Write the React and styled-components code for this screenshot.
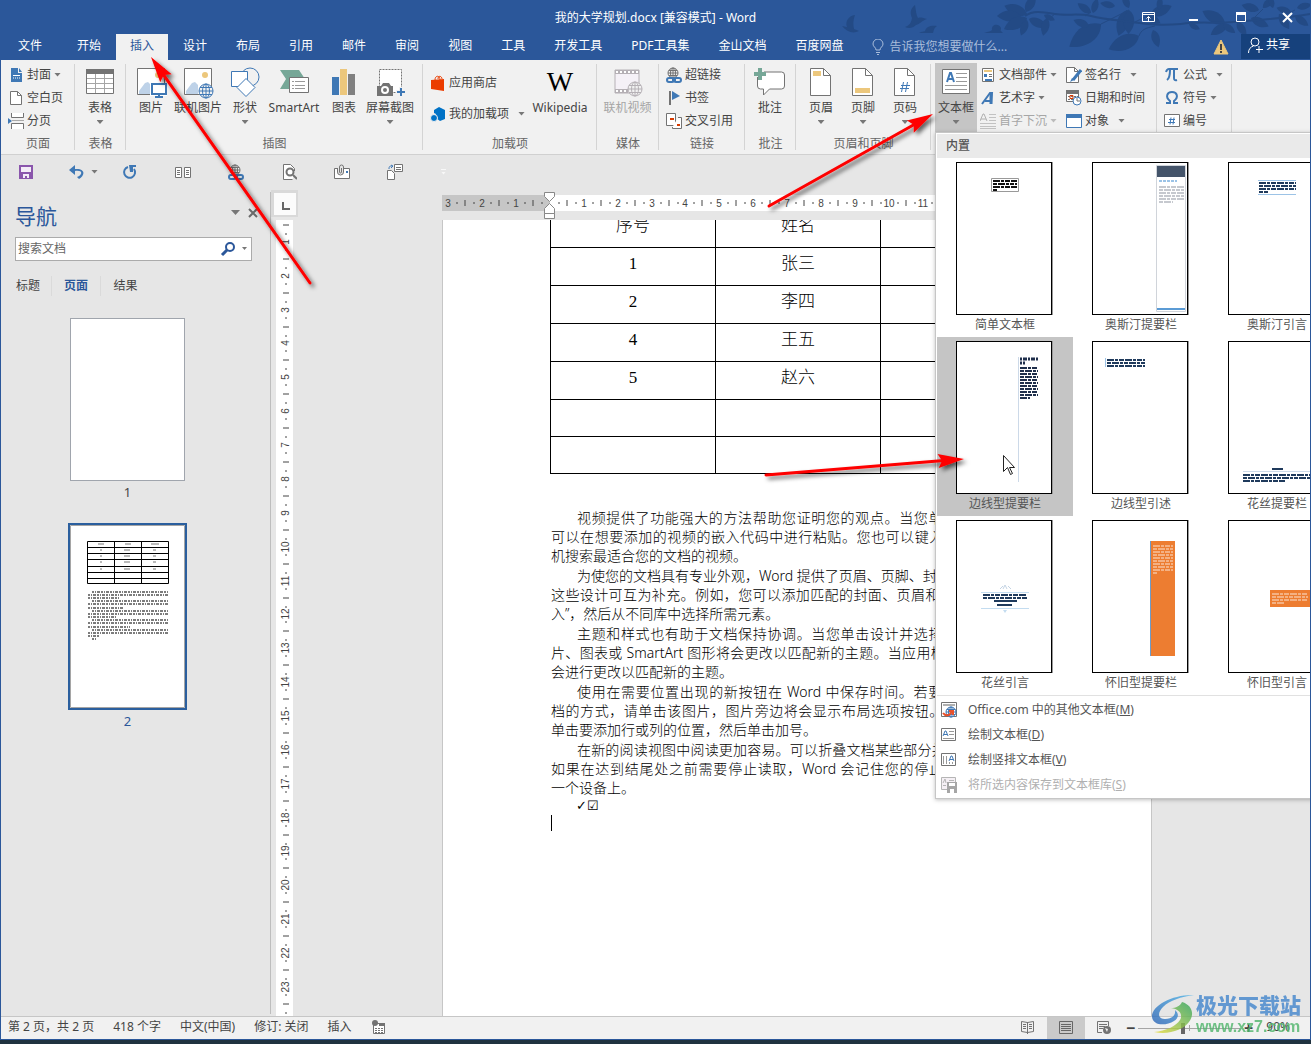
import styled, { createGlobalStyle, css } from "styled-components";

const GlobalStyle = createGlobalStyle`
  * {
    box-sizing: border-box;
  }

  body {
    margin: 0;
    background: #20323f;
  }

  body, button, input {
    font-family: "Noto Sans", "Noto Sans CJK SC", sans-serif;
    font-size: 12px;
    line-height: 16px;
    color: #444;
  }

  button {
    padding: 0;
    border: 0;
    background: none;
    white-space: nowrap;
  }
`;

/* ---------- icons ---------- */

const Svg = styled.svg`
  display: block;
  flex: none;
`;

const Icon = ({ w = 16, h = 16, children }) => (
  <Svg width={w} height={h} viewBox={`0 0 ${w} ${h}`} fill="none" aria-hidden="true">
    {children}
  </Svg>
);

const GREY = "#737373";
const BLUE = "#3f78b5";

const Globe = ({ cx, cy, r, color = BLUE, bg = "#f1f1f1" }) => (
  <g stroke={color} fill="none">
    <circle cx={cx} cy={cy} r={r} fill={bg} />
    <ellipse cx={cx} cy={cy} rx={r / 2} ry={r} />
    <path d={`M${cx - r} ${cy}h${r * 2}M${cx} ${cy - r}v${r * 2}`} />
    <path d={`M${cx - r + 1} ${cy - r / 2}h${r * 2 - 2}M${cx - r + 1} ${cy + r / 2}h${r * 2 - 2}`} />
  </g>
);

const CoverIcon = () => (
  <Icon>
    <path d="M3 1h7v5h4v9H3z" fill={BLUE} />
    <path d="M11 1l3 4h-3z" fill={BLUE} />
    <path d="M5 8l1 1 1-1 1 1 1-1 1 1 1-1 1 1M5 11h1m1 0h1m1 0h1m1 0h1" stroke="#fff" />
  </Icon>
);

const BlankPageIcon = () => (
  <Icon>
    <path d="M2.500 1.500h7l4 4v9h-11z" fill="#fff" stroke={GREY} />
    <path d="M9.500 1.500v4h4" stroke={GREY} />
  </Icon>
);

const PageBreakIcon = () => (
  <Icon>
    <path d="M3.500 0v4.500h12V0M3.500 16v-5.500h12V16" fill="#fff" stroke={GREY} />
    <path d="M0 5l4 3-4 3z" fill={BLUE} />
    <path d="M4 7.500h12" stroke="#aaa" />
  </Icon>
);

const TableIcon = () => (
  <Icon w={30} h={30}>
    <path d="M1.500 2.500h27v24h-27z" fill="#fff" stroke={GREY} />
    <path d="M1 2h28v5H1z" fill={GREY} />
    <path d="M2 11.500h26M2 16.500h26M2 21.500h26M10.500 7v19M19.500 7v19" stroke="#a5a5a5" />
  </Icon>
);

const PictureBase = () => (
  <>
    <path d="M2.500 1.500h27v26h-27z" fill="#fff" stroke={GREY} />
    <circle cx="23" cy="8" r="3" fill="#ecc77c" />
    <path d="M4 27V24l6-8 3-1 3 3v9z" fill="#bed2e8" />
  </>
);

const PictureIcon = () => (
  <Icon w={32} h={32}>
    <PictureBase />
    <path d="M15 16h17v13H15z" fill="#fff" />
    <path d="M17 17h14v10H17z" fill="#fff" stroke={BLUE} strokeWidth="2" />
    <path d="M24 28v3M20 30h8" stroke={BLUE} strokeWidth="2" />
  </Icon>
);

const OnlinePictureIcon = () => (
  <Icon w={32} h={32}>
    <PictureBase />
    <Globe cx={24} cy={24} r={7} />
  </Icon>
);

const ShapesIcon = () => (
  <Icon w={32} h={32}>
    <circle cx="21" cy="10" r="9" stroke={BLUE} />
    <path d="M2.500 4.500h16v15h-16z" fill="#fff" stroke={BLUE} />
    <path d="M17 11.500l9 9-9 9-9-9z" fill="#fff" stroke={BLUE} />
  </Icon>
);

const SmartArtIcon = () => (
  <Icon w={32} h={32}>
    <path d="M2 3h19l6 9-6 10H2l6-10z" fill="#76a797" />
    <path d="M11.500 10.500h19v15h-19z" fill="#fff" stroke={GREY} />
    <path d="M14 14.500h2M14 18.500h2M14 21.500h2M17 14.500h10M17 18.500h10M17 21.500h10" stroke="#999" />
  </Icon>
);

const ChartIcon = () => (
  <Icon w={26} h={30}>
    <path d="M1 10h7v18H1z" fill={BLUE} />
    <path d="M9 2h7v26H9z" fill="#ecc77c" />
    <path d="M17 7h7v21h-7z" fill="#808080" />
  </Icon>
);

const ScreenshotIcon = () => (
  <Icon w={32} h={30}>
    <path d="M5.500 2.500h22v23h-22z" fill="#fff" stroke={GREY} strokeDasharray="2 1" />
    <path d="M3 19h4l2-3h6l2 3h2v10H3z" fill={GREY} />
    <circle cx="11" cy="23" r="3" fill={GREY} stroke="#fff" strokeWidth="2" />
    <path d="M22 25h9M27 20v10" stroke="#f1f1f1" strokeWidth="4" />
    <path d="M23 25h8M27 21v8" stroke={BLUE} strokeWidth="2" />
  </Icon>
);

const StoreIcon = () => (
  <Icon>
    <path d="M1 5l13-1v12L1 14z" fill="#eb3c00" />
    <path d="M5 5c0-5 5-5 5 0M8 4c0-4 4-3 4 0" stroke="#eb3c00" />
  </Icon>
);

const AddinsIcon = () => (
  <Icon>
    <path d="M9 1l6 3v9l-5 2-4-3V8L4 7V4z" fill="#0072c6" />
    <circle cx="4" cy="12" r="3.500" fill="#0072c6" stroke="#f1f1f1" />
  </Icon>
);

const VideoIcon = () => (
  <Icon w={30} h={30}>
    <path d="M2 3h24v23H2z" fill="#f5f1f7" stroke="#b5b0b5" />
    <path d="M2 5h24M2 24h13" stroke="#b5b0b5" strokeWidth="4" />
    <path d="M3 5h23M3 24h12" stroke="#fff" strokeWidth="2" strokeDasharray="2 2" />
    <Globe cx={22} cy={22} r={7} color="#b5b0b5" />
  </Icon>
);

const LinkIcon = () => (
  <Icon>
    <Globe cx={7} cy={6} r={5} color={GREY} />
    <rect x="1" y="11" width="7" height="4" rx="2" stroke={BLUE} strokeWidth="2" fill="#f1f1f1" />
    <rect x="8" y="11" width="7" height="4" rx="2" stroke={BLUE} strokeWidth="2" fill="#f1f1f1" />
    <path d="M6 13h4" stroke={BLUE} strokeWidth="2" />
  </Icon>
);

const FlagIcon = () => (
  <Icon>
    <path d="M3 1h2v14H3z" fill={GREY} />
    <path d="M6 1l8 5-8 4z" fill={BLUE} />
  </Icon>
);

const CrossRefIcon = () => (
  <Icon>
    <path d="M.500 .500h9v12h-9z" fill="#fff" stroke={GREY} />
    <path d="M12 4.500h3.500v11h-9V14" fill="#fff" stroke={GREY} />
    <path d="M4 5h4v2H4zM11 11h3v2h-3z" fill="#d83b01" />
  </Icon>
);

const CommentIcon = () => (
  <Icon w={32} h={32}>
    <path
      d="M3.500 10v9q0 3 3 3h3v6l6-6h12q3 0 3-3v-11q0-3-3-3H10"
      fill="#fff"
      stroke={GREY}
    />
    <path d="M4 1h4v4h4v4H8v4H4V9H0V5h4z" fill="#76a797" />
  </Icon>
);

const PageShape = ({ children }) => (
  <Icon w={24} h={30}>
    <path d="M1.500 1.500h13l7 7v20h-20z" fill="#fff" stroke={GREY} />
    <path d="M14.500 1.500v7h7" stroke={GREY} />
    {children}
  </Icon>
);

const HeaderIcon = () => (
  <PageShape>
    <path d="M4 4h8v5H4z" fill="#ecc77c" />
  </PageShape>
);

const FooterIcon = () => (
  <PageShape>
    <path d="M4 21h15v5H4z" fill="#ecc77c" />
  </PageShape>
);

const PageNumberIcon = () => (
  <PageShape>
    <path d="M10.500 15l-2 10M14.500 15l-2 10" stroke={BLUE} strokeWidth="1" />
    <path d="M8 18.500h9M7 21.500h9" stroke={BLUE} strokeWidth="1" />
  </PageShape>
);

const TextBoxIcon = () => (
  <Icon w={30} h={30}>
    <path d="M1.500 2.500h27v24h-27z" fill="#fff" stroke={GREY} />
    <path d="M6 15L9 6h1l3 9M7 12h5" stroke={BLUE} strokeWidth="2" />
    <path d="M15 6.500h11M15 10.500h11M15 14.500h11M4 18.500h22M4 22.500h22" stroke="#9a9a9a" />
  </Icon>
);

const PartsIcon = () => (
  <Icon>
    <path d="M2.500 1.500h11v13h-11z" fill="#fff" stroke={GREY} />
    <path d="M4 3h8v2H4z" fill="#ecc77c" />
    <path d="M4 7h3v3H4zM5 12h7v2H5z" fill={BLUE} />
    <path d="M9 7.500h3M9 9.500h3" stroke={GREY} />
  </Icon>
);

const WordArtIcon = () => (
  <Icon>
    <path d="M2 14L10 3h2l-1 11M5 11h6" stroke={BLUE} strokeWidth="2" />
    <path d="M11 4v10" stroke={BLUE} strokeWidth="3" />
  </Icon>
);

const DropCapIcon = () => (
  <Icon>
    <path d="M0 8L3 1h1l3 7M1 6h5" stroke="#b0b0b0" />
    <path d="M9 1.500h7M9 4.500h7M9 7.500h7M0 10.500h16M0 13.500h16M0 15.500h16" stroke="#c2c2c2" />
  </Icon>
);

const SignatureIcon = () => (
  <Icon>
    <path d="M.500 .500h8l4 4v11h-12z" fill="#fff" stroke={GREY} />
    <path d="M8.500 .500v4h4" stroke={GREY} />
    <path d="M15 3l-8 10" stroke={BLUE} strokeWidth="3" />
    <path d="M6 11l-2 4 4-2z" fill={BLUE} />
  </Icon>
);

const DateIcon = () => (
  <Icon>
    <path d="M.500 1.500h12v10h-12z" fill="#fff" stroke={GREY} />
    <path d="M0 0h13v4H0z" fill={GREY} />
    <path d="M2 6.500h10M2 9.500h7" stroke={GREY} strokeDasharray="2 1" />
    <path d="M4 5.500h3v3H4z" stroke="#d83b01" />
    <circle cx="11" cy="11" r="4" fill="#fff" stroke={BLUE} />
    <path d="M11 8v3h3" stroke={GREY} />
  </Icon>
);

const ObjectIcon = () => (
  <Icon>
    <path d="M.500 1.500h15v13H.500z" fill="#fff" stroke={BLUE} />
    <path d="M0 1h16v4H0z" fill={BLUE} />
  </Icon>
);

const PiIcon = () => (
  <Icon>
    <path d="M2 5q1-3 3-3h9M6 3q0 8-3 10M10 3v8q0 3 3 2" stroke={BLUE} strokeWidth="2" />
  </Icon>
);

const OmegaIcon = () => (
  <Icon>
    <path d="M2 13h4v-2C1 7 3 2 8 2s7 5 2 9v2h4" stroke={BLUE} strokeWidth="2" />
  </Icon>
);

const NumberIcon = () => (
  <Icon>
    <path d="M.500 1.500h15v12H.500z" fill="#fff" stroke={GREY} />
    <path d="M7 4.500l-1 7M10 4.500l-1 7M5 6.500h6M4 9.500h7" stroke={BLUE} />
  </Icon>
);

const SaveIcon = () => (
  <Icon>
    <path d="M0 1h14v14H0z" fill="#8a56ac" />
    <path d="M2 3h10v5H2zM4 10h6v4H8v-2H6v2H4z" fill="#f3ecf7" />
  </Icon>
);

const UndoIcon = () => (
  <Icon>
    <path d="M6 1L0 6l6 5V7c9-1 7 4 2 6l2 2c6-3 7-11-4-10z" fill={BLUE} />
  </Icon>
);

const RedoIcon = () => (
  <Icon>
    <path d="M6 3a5.500 5.500 0 1 0 6 2" stroke={BLUE} strokeWidth="2" />
    <path d="M7 1h7v2h-3v5H8z" fill={BLUE} />
  </Icon>
);

const ColumnsIcon = () => (
  <Icon>
    <path d="M.500 3.500h6v10h-6zM9.500 3.500h6v10h-6z" fill="#fff" stroke={GREY} />
    <path d="M2 6.500h3M2 8.500h3M2 10.500h3M11 6.500h3M11 8.500h3M11 10.500h3" stroke={GREY} />
  </Icon>
);

const PreviewIcon = () => (
  <Icon>
    <path d="M13.500 7V4.500l-4-4h-7v15h9" fill="#fff" stroke={GREY} />
    <circle cx="9" cy="8" r="3.500" fill="#fff" stroke={GREY} strokeWidth="2" />
    <path d="M12 11l4 4" stroke={GREY} strokeWidth="2" />
  </Icon>
);

const AttachIcon = () => (
  <Icon>
    <path d="M.500 4.500h15v10H.500z" fill="#fff" stroke={GREY} />
    <path d="M12 7h2v2h-2z" fill={BLUE} />
    <path d="M3 2h7v8H3z" fill="#e6e6e6" />
    <path d="M3.500 4v4q0 3 3 3t3-3V3q0-2-2-2t-2 2v5q0 1 1 1t1-1V4" stroke={GREY} />
  </Icon>
);

const FieldIcon = () => (
  <Icon>
    <path d="M7.500 .500h8v7h-8z" fill="#fff" stroke={GREY} />
    <path d="M9 3.500h5M9 5.500h5" stroke={GREY} />
    <path d="M.500 6.500h4l3 3v6h-7z" fill="#fff" stroke={GREY} />
    <path d="M2 5c0-3 1-3 3-3M4 1l2 1-2 2" stroke={BLUE} />
  </Icon>
);

const SearchIcon = () => (
  <Icon>
    <circle cx="10" cy="6" r="4" stroke="#2b579a" strokeWidth="2" />
    <path d="M7 9l-5 5" stroke="#2b579a" strokeWidth="3" />
  </Icon>
);

const CloseIcon = () => (
  <Icon w={12} h={12}>
    <path d="M2 2l8 8M10 2l-8 8" stroke="#6a6a6a" strokeWidth="2" />
  </Icon>
);

const BulbIcon = () => (
  <Icon>
    <path d="M6 11c0-3-3-3-3-6a5 5 0 0 1 10 0c0 3-3 3-3 6z" stroke="#a9bddb" />
    <path d="M6 13.500h4M7 15.500h2" stroke="#a9bddb" />
  </Icon>
);

const WarningIcon = () => (
  <Icon>
    <path d="M8 1l7 14H1z" fill="#ecc77c" stroke="#ecc77c" strokeLinejoin="round" />
    <path d="M7 5h2v6H7zM7 12h2v2H7z" fill="#444" />
  </Icon>
);

const PersonIcon = () => (
  <Icon>
    <circle cx="8" cy="5" r="4" stroke="#fff" />
    <path d="M1.500 16c0-4 2-6 5-7M12 9v7M9 12.500h7" stroke="#fff" />
  </Icon>
);

const RibbonToggleIcon = () => (
  <Icon>
    <path d="M1.500 2.500h12v9h-12zM1 4.500h13" stroke="#fff" />
    <path d="M7.500 11V6.500M5.500 8.500l2-2 2 2" stroke="#fff" />
  </Icon>
);

const MinimizeIcon = () => (
  <Icon>
    <path d="M2 9h9v2H2z" fill="#fff" />
  </Icon>
);

const MaximizeIcon = () => (
  <Icon>
    <path d="M3.500 3.500h9v8h-9z" stroke="#fff" />
    <path d="M3 2h10v3H3z" fill="#fff" />
  </Icon>
);

const ExitIcon = () => (
  <Icon>
    <path d="M4 3l9 9M13 3l-9 9" stroke="#fff" strokeWidth="2" />
  </Icon>
);

const MacroIcon = () => (
  <Icon>
    <path d="M2.500 4.500h11v10h-11z" fill="#fff" stroke={GREY} />
    <path d="M8 4h6v3H8z" fill={GREY} />
    <circle cx="4" cy="4" r="3" fill={GREY} />
    <path d="M4 9.500h8M4 11.500h8M4 13.500h8" stroke={GREY} strokeDasharray="2 1" />
  </Icon>
);

const ReadModeIcon = () => (
  <Icon>
    <path d="M7.500 3.500l-6-1v10l6 1 6-1v-10z" stroke={GREY} />
    <path d="M7.500 3v12M3 5.500h3M3 7.500h3M3 9.500h3M9 5.500h3M9 7.500h3M9 9.500h3" stroke={GREY} />
  </Icon>
);

const PrintLayoutIcon = () => (
  <Icon>
    <path d="M1.500 2.500h13v12h-13z" stroke="#666" />
    <path d="M3 5.500h10M3 7.500h10M3 9.500h10M3 11.500h10" stroke="#666" />
  </Icon>
);

const WebLayoutIcon = () => (
  <Icon>
    <path d="M6 13.500H1.500v-11h11V7M3 5.500h8M3 7.500h6M3 9.500h4" stroke={GREY} />
    <circle cx="11" cy="11" r="4" fill={GREY} />
    <path d="M9 9l3 1-1 3z" fill="#f1f1f1" />
  </Icon>
);

const OfficeMoreIcon = () => (
  <Icon>
    <path d="M.500 .500h15v14H.500z" fill="#fff" stroke={GREY} />
    <path d="M2 3h12" stroke="#b0b0b0" strokeWidth="2" />
    <Globe cx={10} cy={10} r={5} bg="#fff" />
    <path d="M2 11q2 3 6 2l3-3M8 9h4v4" stroke="#e8502a" strokeWidth="2" />
  </Icon>
);

const DrawBoxIcon = () => (
  <Icon>
    <path d="M.500 1.500h14v12H.500z" fill="#fff" stroke={GREY} />
    <path d="M2 9l2-5h1l2 5M3 7.500h3" stroke={BLUE} />
    <path d="M8 4.500h5M8 7.500h5M2 11.500h11" stroke="#999" />
  </Icon>
);

const DrawVerticalIcon = () => (
  <Icon>
    <path d="M.500 1.500h14v12H.500z" fill="#fff" stroke={GREY} />
    <path d="M8 9l2-5h1l2 5M9 7.500h3" stroke={BLUE} />
    <path d="M2.500 4v8M5.500 4v8M8.500 10v2M11.500 10v2" stroke="#999" />
  </Icon>
);

const SaveBoxIcon = () => (
  <Icon>
    <path d="M.500 .500h14v12H.500z" fill="#f5f0f5" stroke="#b5b5b5" />
    <path d="M2 6l2-4 1 4M8 3.500h5M2 8.500h3" stroke="#b5b5b5" />
    <path d="M6 5h10v11H6z" fill="#a6a6a6" />
    <path d="M8 6h6v3H8zM9 12h4v4H9z" fill="#fff" />
  </Icon>
);

/* branches and birds behind the window title: x, y, angle, scale of each leaf */
const LEAVES = [
  [188, 14, 204, 1.6], [182, 16, 184, 1.6], [188, 18, 158, 1.7], [187, 12, 302, 1.3],
  [190, 19, 28, 1.3], [188, 20, 115, 1.1], [208, 18, 106, 1.2], [205, 15, 30, 0.8],
  [262, 24, 148, 2.6], [250, 26, 205, 1.1], [252, 13, 220, 1.1], [254, 13, 290, 1],
  [288, 10, 112, 1.8], [290, 10, 95, 1.6], [300, 36, 160, 2.2], [276, 6, 195, 1],
  [290, 8, 250, 1], [314, 30, 76, 1.2], [312, 15, 340, 1.5], [306, 14, 35, 1.2],
  [320, 10, 280, 0.9], [350, 24, 30, 0.8], [386, 23, 212, 1.7], [388, 24, 150, 1.3],
  [384, 24, 40, 1], [398, 22, 60, 1.1], [412, 18, 30, 1.3], [420, 10, 200, 1.2],
  [424, 8, 320, 1], [440, 14, 60, 1.2], [434, 8, 260, 0.8], [452, 12, 200, 1], [458, 8, 350, 1],
  [456, 16, 40, 1.1],
];

const TitleArt = () => (
  <Icon w={471} h={60}>
    <g fill="#234a85">
      <path d="M3 26l5 1C6 22 9 16 16 15c-2 5-2 10-1 14l5 2c-6 3-12 1-17-5z" />
      <path d="M66 27c5-2 6-4 7-9-2-5-2-9 3-13 1 5 1 10 3 13 3-1 5 0 9 1-6 2-7 5-11 6-3 3-7 4-11 2z" />
      <path d="M80 33c3-2 5-1 6-2 1-5 7-6 12-5-4 3-3 5-4 7z" />
      <path d="M145 33c5-2 6-1 8-3-1-6 7-7 9-2 0 2-1 3 0 3l2 2z" />
      {LEAVES.map(([x, y, deg, size]) => (
        <path
          key={`${x}-${y}-${deg}`}
          d="M0 0C3 -5 10 -5 15 -1C10 4 4 4 0 0Z"
          transform={`translate(${x} ${y}) rotate(${deg}) scale(${size})`}
        />
      ))}
    </g>
    <g stroke="#234a85">
      <path d="M186 16c8-6 18-4 30-2s24-1 36 2 24 4 40 6 28 4 50 2" strokeWidth="2" />
      <path d="M342 24c20-3 34 0 52-2s40-2 77-8" strokeWidth="2" />
      <path d="M216 14l-8 6M246 16l6-4M262 24l28-14M300 36c2-6 6-8 16-10M296 22l16-8M412 21l12-12M440 18l16-8" />
    </g>
  </Icon>
);

/* ---------- window frame ---------- */

const Window = styled.div`
  position: relative;
  display: flex;
  flex-direction: column;
  height: calc(100vh - 4px);
  min-height: 600px;
  overflow: hidden;
  border: 1px solid #2b579a;
  border-top: 0;
  background: #e6e6e6;
`;

const TitleArea = styled.header`
  position: relative;
  flex: none;
  background: #2b579a;
  color: #fff;
`;

const ArtLayer = styled.div`
  position: absolute;
  top: 0;
  right: 0;
`;

const TitleBar = styled.div`
  position: relative;
  display: grid;
  grid-template-columns: 1fr auto 1fr;
  align-items: center;
  height: 34px;
  padding-top: 1px;
`;

const Title = styled.h1`
  grid-column: 2;
  margin: 0;
  font-size: 12px;
  font-weight: 400;
`;

const WindowControls = styled.div`
  display: flex;
  justify-content: flex-end;
  gap: 30px;
  padding-right: 15px;
`;

const TabBar = styled.nav`
  position: relative;
  display: flex;
  gap: 1px;
  height: 26px;
`;

const Tab = styled.button`
  padding: 0 14px 2px;
  color: ${({ $active }) => ($active ? "#2b579a" : "#fff")};
  background: ${({ $active }) => ($active ? "#f1f1f1" : "transparent")};

  &:first-child {
    padding: 0 20px 2px 17px;
  }
`;

const TellMe = styled.label`
  display: flex;
  flex: 1;
  align-items: center;
  gap: 3px;
  padding: 0 0 0 12px;

  input {
    width: 180px;
    padding: 0;
    border: 0;
    outline: 0;
    background: none;
  }

  input::placeholder {
    color: #a9bddb;
    opacity: 1;
  }
`;

const WarningSlot = styled.span`
  display: flex;
  align-items: center;
  padding-right: 11px;
`;

const ShareButton = styled.button`
  display: flex;
  align-items: center;
  gap: 3px;
  width: 69px;
  height: 25px;
  padding: 0 6px 4px;
  background: #16417c;
  color: #fff;
`;

/* ---------- ribbon ---------- */

const Ribbon = styled.section`
  display: flex;
  flex: none;
  height: 95px;
  border-bottom: 1px solid #d0d0d0;
  background: #f1f1f1;
`;

const Group = styled.div`
  position: relative;
  display: flex;
  flex: none;
  flex-direction: column;
  width: ${({ $width }) => $width}px;
  padding-top: 3px;

  &::after {
    content: "";
    position: absolute;
    top: 4px;
    right: 0;
    width: 1px;
    height: 86px;
    background: #d4d4d4;
  }
`;

const GroupBody = styled.div`
  display: flex;
  height: 69px;
  padding-left: ${({ $pad }) => $pad || 0}px;
`;

const GroupName = styled.div`
  padding-top: 4px;
  text-align: center;
  color: #666;
`;

const Caret = styled.i`
  flex: none;
  width: 7px;
  height: 4px;
  background: ${({ $dim }) => ($dim ? "#bbb" : "#777")};
  clip-path: polygon(0 0, 100% 0, 50% 100%);
`;

const BigButton = styled.button`
  display: flex;
  flex: none;
  flex-direction: column;
  align-items: center;
  width: ${({ $width }) => $width || 42}px;
  height: 69px;
  color: ${({ disabled }) => (disabled ? "#a6a6a6" : "#444")};
  background: ${({ $pressed }) => ($pressed ? "#c5c5c5" : "transparent")};

  ${Caret} {
    margin-top: 4px;
  }
`;

const BigIcon = styled.span`
  display: flex;
  align-items: flex-start;
  height: 37px;
  padding-top: 4px;
`;

const WikiLetter = styled.span`
  font-family: "Liberation Serif", serif;
  font-size: 28px;
  line-height: 30px;
  color: #000;
`;

const SmallColumn = styled.div`
  display: flex;
  flex: none;
  flex-direction: column;
  width: ${({ $width }) => $width || 80}px;
  padding-top: ${({ $loose }) => ($loose ? 4 : 0)}px;
`;

const SmallButton = styled.button`
  display: flex;
  align-items: center;
  gap: 3px;
  height: ${({ $tall }) => ($tall ? 31 : 23)}px;
  color: ${({ disabled }) => (disabled ? "#a6a6a6" : "#444")};

  ${Caret} {
    margin-left: ${({ $far }) => ($far ? 6 : 0)}px;
  }
`;

const Big = ({ icon, label, caret, ...rest }) => (
  <BigButton {...rest}>
    <BigIcon>{icon}</BigIcon>
    {label}
    {caret && <Caret />}
  </BigButton>
);

const Small = ({ icon, label, caret, ...rest }) => (
  <SmallButton {...rest}>
    {icon}
    {label}
    {caret && <Caret $dim={rest.disabled} />}
  </SmallButton>
);

/* ---------- quick access toolbar ---------- */

const QuickBar = styled.div`
  display: flex;
  flex: none;
  align-items: center;
  height: 35px;
  padding: 0 0 2px 18px;
`;

const QuickSlot = styled.div`
  display: flex;
  align-items: center;
  gap: 6px;
  width: 53px;

  &:first-child {
    width: 50px;
  }
`;

const QuickMore = styled.button`
  display: flex;
  flex-direction: column;
  align-items: center;
  gap: 2px;
  margin-left: 1px;

  &::before {
    content: "";
    width: 5px;
    height: 1px;
    background: #f8f8f8;
  }

  ${Caret} {
    width: 5px;
    height: 3px;
    background: #f8f8f8;
  }
`;

/* ---------- navigation pane ---------- */

const Workspace = styled.div`
  display: flex;
  flex: 1;
  min-height: 0;
`;

const NavPane = styled.aside`
  flex: none;
  width: 270px;
  margin: 2px 0;
  border-right: 1px solid #bdbdbd;
  padding: 9px 18px 0 14px;
`;

const NavHeader = styled.div`
  display: flex;
  align-items: flex-start;
  gap: 7px;
  margin-right: -7px;

  h2 {
    flex: 1;
    margin: 0;
    font-size: 21px;
    line-height: 30px;
    font-weight: 400;
    color: #2b579a;
  }

  button {
    display: flex;
    align-items: center;
    height: 23px;
  }
`;

const WideCaret = styled(Caret)`
  width: 9px;
  height: 5px;
`;

const SearchBox = styled.label`
  display: flex;
  align-items: center;
  height: 24px;
  margin-top: 6px;
  border: 1px solid #ababab;
  padding: 0 4px 1px 2px;
  background: #fff;

  input {
    flex: 1;
    min-width: 0;
    border: 0;
    outline: 0;
    padding: 0;
  }

  input::placeholder {
    color: #666;
    opacity: 1;
  }

  ${Caret} {
    margin-left: 6px;
    width: 5px;
    height: 3px;
  }
`;

const NavTabs = styled.div`
  display: flex;
  margin-top: 15px;
`;

const NavTab = styled.button`
  height: 20px;
  width: 49px;
  border-right: 1px solid #dadada;

  &:first-child {
    width: 37px;
    padding-right: 10px;
  }

  &:last-child {
    border-right: 0;
  }

  ${({ $active }) =>
    $active &&
    css`
      font-weight: 700;
      color: #2b579a;
    `}
`;

const PageList = styled.div`
  display: flex;
  flex-direction: column;
  align-items: center;
  padding: 22px 12px 0 0;
`;

const PageThumb = styled.button`
  width: ${({ $active }) => ($active ? 119 : 115)}px;
  height: ${({ $active }) => ($active ? 187 : 163)}px;
  border: ${({ $active }) => ($active ? "2px solid #2b5f9e" : "1px solid #a0a5ad")};
  background: #fff;
  overflow: hidden;
`;

const PageLabel = styled.span`
  margin: 3px 0 23px;
  font-size: 13px;
  color: ${({ $active }) => ($active ? "#2b579a" : "#444")};
`;

const MINI_LINES = [
  [22, 98, 67], [18, 98, 70], [18, 49, 73], [22, 98, 76], [18, 98, 79], [18, 54, 83],
  [22, 98, 86], [18, 98, 89], [18, 46, 92], [22, 98, 95], [18, 98, 98], [18, 60, 102],
  [22, 98, 105], [18, 98, 108], [18, 30, 111], [22, 26, 114],
];

const MiniPage = () => (
  <Icon w={115} h={183}>
    <path d="M.500 .500h114v182H.500z" stroke="#a5a5a5" />
    <path
      d="M17.500 16.500h81v42h-81zM17 22.500h82M17 28.500h82M17 34.500h82M17 41.500h82M17 47.500h82M17 53.500h82M44.500 16v43M71.500 16v43"
      stroke="#000"
    />
    {[19, 25, 31, 37, 44].map((y, i) => (
      <path
        key={y}
        d={i ? `M30 ${y}h2M54 ${y}h6M83 ${y}h3` : `M28 ${y}h6M55 ${y}h6M81 ${y}h8`}
        stroke="#777"
      />
    ))}
    {MINI_LINES.map(([x1, x2, y]) => (
      <path
        key={y}
        d={`M${x1} ${y}H${x2}`}
        stroke="#444"
        strokeWidth="2"
        strokeOpacity="0.7"
        strokeDasharray="2 1 1 1 3 1"
      />
    ))}
  </Icon>
);

/* ---------- rulers ---------- */

// one ruler centimetre at 90% zoom, snapped to whole pixels
const cm = (n) => Math.round((n * 508) / 15);

const RulerText = styled.text`
  font-family: "Liberation Sans", sans-serif;
  font-size: 10px;
  fill: #444;
  text-anchor: middle;
`;

const RulerColumn = styled.div`
  display: flex;
  flex: none;
  flex-direction: column;
  align-items: center;
  width: 27px;
  margin-right: -5px;
  overflow: hidden;
`;

const TabStop = styled.button`
  display: flex;
  flex: none;
  align-items: center;
  justify-content: center;
  width: 27px;
  height: 27px;
  background: #d9d9d9;

  span {
    width: 22px;
    height: 22px;
    padding: 9px 8px;
    background: #fbfbfb;
  }

  i {
    display: block;
    width: 8px;
    height: 8px;
    border: solid #666;
    border-width: 0 0 2px 2px;
  }
`;

const VerticalTrack = styled.div`
  flex: 1;
  min-height: 0;
  width: 17px;
  margin: 3px 0 0 -1px;
  background: #fff;
  overflow: hidden;
`;

const VerticalRuler = () => (
  <VerticalTrack>
    <Icon w={17} h={820}>
      {Array.from({ length: 24 }, (_, n) => {
        const y = cm(n) - 12;
        return (
          <g key={n}>
            {n > 0 && (
              <RulerText transform={`translate(13 ${y}) rotate(-90)`}>{n}</RulerText>
            )}
            <path d={`M9 ${y + 8}h2M9 ${y + 26}h2`} stroke="#444" />
            <path d={`M7 ${y + 17}h6`} stroke="#444" />
          </g>
        );
      })}
    </Icon>
  </VerticalTrack>
);

const ZERO = 108;

const HorizontalRuler = () => (
  <Icon w={710} h={30}>
    <path d="M0 5h710v16H0z" fill="#fff" />
    <path d={`M0 5h${ZERO}v16H0zM603 5h107v16H603z`} fill="#c6c6c6" />
    {Array.from({ length: 20 }, (_, i) => {
      const n = i - 3;
      const x = ZERO + cm(n);
      return (
        <g key={n}>
          {n !== 0 && (
            <RulerText x={x} y={17}>
              {Math.abs(n)}
            </RulerText>
          )}
          <path d={`M${x + 9} 12v2M${x + 26} 12v2M${x + 17} 10v6`} stroke="#444" />
        </g>
      );
    })}
    <path
      d="M102.500 2.500h10v4l-5 5-5-5zM102.500 23.500v-5l5-5 5 5v5zM102.500 23.500h10v5h-10z"
      fill="#fff"
      stroke="#888"
    />
  </Icon>
);

/* ---------- document ---------- */

const DocColumn = styled.div`
  display: flex;
  flex: 1;
  flex-direction: column;
  align-items: center;
  min-width: 0;
  padding-right: 9px;
  overflow: hidden;
`;

const Sheet = styled.main`
  flex: 1;
  width: 710px;
  min-height: 0;
  overflow: hidden;
  border: 1px solid #c6c6c6;
  border-width: 0 1px;
  padding: 0 106px 0 107px;
  background: #fff;
  color: #000;
`;

const ScoreTable = styled.table`
  width: 496px;
  margin-top: -11px;
  border-collapse: collapse;
  table-layout: fixed;
  font-family: "Liberation Serif", "Noto Sans CJK SC", serif;
  font-size: 17px;
  line-height: 20px;
  font-weight: 300;

  td, th {
    height: 38px;
    border: 1px solid #000;
    padding: 0 0 5px;
    text-align: center;
    font-weight: 300;
  }

  tr:nth-last-child(-n + 2) td {
    height: 37px;
  }
`;

const Article = styled.div`
  padding: 34px 0 0 1px;
  font-family: "Noto Sans", "Noto Sans CJK SC", sans-serif;
  font-size: 14px;
  line-height: 19px;
  font-weight: 300;
`;

const Paragraph = styled.p`
  margin: 0 0 1px;
  text-indent: 26px;
`;

const Line = styled.span`
  display: block;
  white-space: nowrap;
  text-align: justify;
  text-align-last: justify;

  & + & {
    text-indent: 0;
  }

  &:last-child {
    text-align-last: left;
  }
`;

const CheckLine = styled.div`
  padding-left: 25px;
  font-family: "DejaVu Sans", sans-serif;
  font-size: 13px;
  line-height: 16px;
`;

const TextCaret = styled.div`
  width: 1px;
  height: 16px;
  margin-top: 1px;
  background: #000;
`;

const ROWS = [
  ["1", "张三"],
  ["2", "李四"],
  ["4", "王五"],
  ["5", "赵六"],
  ["", ""],
  ["", ""],
];

// full-width comma
const C = "\uff0c";

const PARAGRAPHS = [
  [
    `视频提供了功能强大的方法帮助您证明您的观点。当您单击联机视频时${C}`,
    "可以在想要添加的视频的嵌入代码中进行粘贴。您也可以键入一个关键字以联",
    "机搜索最适合您的文档的视频。",
  ],
  [
    `为使您的文档具有专业外观${C}Word 提供了页眉、页脚、封面和文本框设计${C}`,
    `这些设计可互为补充。例如${C}您可以添加匹配的封面、页眉和提要栏。单击“插`,
    `入”${C}然后从不同库中选择所需元素。`,
  ],
  [
    `主题和样式也有助于文档保持协调。当您单击设计并选择新的主题时${C}图`,
    `片、图表或 SmartArt 图形将会更改以匹配新的主题。当应用样式时${C}您的标题`,
    "会进行更改以匹配新的主题。",
  ],
  [
    "使用在需要位置出现的新按钮在 Word 中保存时间。若要更改图片适应文",
    `档的方式${C}请单击该图片${C}图片旁边将会显示布局选项按钮。当处理表格时${C}`,
    `单击要添加行或列的位置${C}然后单击加号。`,
  ],
  [
    "在新的阅读视图中阅读更加容易。可以折叠文档某些部分并关注所需文本。",
    `如果在达到结尾处之前需要停止读取${C}Word 会记住您的停止位置 - 即使在另`,
    "一个设备上。",
  ],
];

/* ---------- text box gallery ---------- */

const Gallery = styled.div`
  position: absolute;
  z-index: 2;
  top: 72px;
  left: 4px;
  width: 430px;
  border: 1px solid #c6c6c6;
  padding: 1px;
  background: #fff;
  box-shadow: 0 1px 4px rgba(0, 0, 0, 0.25);
`;

const GalleryHeading = styled.h3`
  height: 24px;
  margin: 0;
  padding: 4px 9px;
  background: #eaeaea;
  font-size: 12px;
  font-weight: 500;
  color: #555;
`;

const GalleryGrid = styled.div`
  display: grid;
  grid-template-columns: repeat(3, 136px);
  border-bottom: 1px solid #e1e1e1;
`;

const GalleryItem = styled.button`
  display: flex;
  flex-direction: column;
  align-items: center;
  height: 179px;
  padding-top: 4px;
  line-height: 20px;
  background: ${({ $hot }) => ($hot ? "#c5c5c5" : "transparent")};
  color: #555;
`;

const Preview = styled.span`
  width: 96px;
  height: 153px;
  margin-right: 2px;
  border: 1px solid #000;
  background: #fff;
  box-shadow: 1px 0 #999;
  overflow: hidden;
`;

const MenuItem = styled.button`
  display: flex;
  align-items: center;
  gap: 11px;
  width: 100%;
  height: 25px;
  padding-left: 4px;
  color: ${({ disabled }) => (disabled ? "#b0b0b0" : "#555")};
`;

const Menu = styled.div`
  padding: 1px 0 0;
`;

// rows of tiny unreadable type inside a preview
const Blurb = ({ x, y, width, rows, color, last = 12, step = 3 }) =>
  Array.from({ length: rows }, (_, i) => (
    <path
      key={i}
      d={`M${x} ${y + i * step}h${i === rows - 1 ? last : width}`}
      stroke={color}
      strokeWidth="2"
      strokeDasharray={i % 2 ? "4 1 7 1 3 1" : "7 1 3 1 5 1"}
    />
  ));

const GALLERY = [
  {
    name: "简单文本框",
    art: (
      <>
        <path d="M34.500 15.500h27v13h-27z" stroke="#999" />
        <Blurb x={36} y={18} width={24} rows={4} color="#111" last={5} />
      </>
    ),
  },
  {
    name: "奥斯汀提要栏",
    art: (
      <>
        <path d="M63.500 2.500h29v146h-29z" stroke="#d0d4da" />
        <path d="M64 3h28v11H64z" fill="#44546a" />
        <path d="M66 18h18" stroke="#9cc3e6" strokeWidth="2" strokeDasharray="3 1" />
        <Blurb x={66} y={24} width={25} rows={6} color="#c6c9cf" last={14} />
        <path d="M64 146h28" stroke="#5b9bd5" strokeWidth="2" />
      </>
    ),
  },
  {
    name: "奥斯汀引言",
    art: (
      <>
        <path d="M29 17.500h38M29 31.500h38" stroke="#9cc3e6" />
        <Blurb x={30} y={20} width={37} rows={4} color="#1f3a5c" last={9} />
      </>
    ),
  },
  {
    name: "边线型提要栏",
    hot: true,
    art: (
      <>
        <path d="M61.500 15v125" stroke="#ccd9e8" />
        <path d="M63 17h18M63 21h5" stroke="#1f2f4c" strokeWidth="3" strokeDasharray="2 1 4 1" />
        <Blurb x={63} y={26} width={18} rows={11} color="#1f2f4c" last={10} />
      </>
    ),
  },
  {
    name: "边线型引述",
    art: (
      <>
        <path d="M12.500 16v9" stroke="#9cc3e6" />
        <Blurb x={14} y={18} width={38} rows={3} color="#1f3a5c" last={38} />
      </>
    ),
  },
  {
    name: "花丝提要栏",
    art: (
      <>
        <path d="M43 127h11" stroke="#1f3a5c" strokeWidth="2" />
        <path d="M14 129.500h76" stroke="#ccd9e8" />
        <Blurb x={14} y={133} width={76} rows={3} color="#1f3a5c" last={42} />
      </>
    ),
  },
  {
    name: "花丝引言",
    art: (
      <>
        <path d="M43 68l3-3m5 0l3 3M46 68l2-4 2 4" stroke="#c3d3e4" />
        <path d="M24 71.500h48M24 87.500h48" stroke="#c3dcf0" />
        <Blurb x={26} y={74} width={44} rows={2} color="#1f3a5c" last={44} />
        <path d="M37 80h23M40 84h15" stroke="#1f3a5c" strokeWidth="2" />
        <path d="M46 89l2 3 2-3z" fill="#c3dcf0" />
      </>
    ),
  },
  {
    name: "怀旧型提要栏",
    art: (
      <>
        <path d="M57 20h25v115H57z" fill="#ed7d31" />
        <path d="M57 20h1v115h-1z" fill="#6f9bc8" />
        <Blurb x={60} y={25} width={20} rows={10} color="#f4b183" last={5} />
      </>
    ),
  },
  {
    name: "怀旧型引言",
    art: (
      <>
        <path d="M41 69h41v17H41z" fill="#ed7d31" />
        <path d="M81 69h1v17h-1z" fill="#6f9bc8" />
        <Blurb x={43} y={73} width={36} rows={4} color="#f4b183" last={12} />
      </>
    ),
  },
];

/* ---------- status bar ---------- */

const StatusBar = styled.footer`
  display: flex;
  flex: none;
  align-items: stretch;
  height: 23px;
  border-top: 1px solid #c6c6c6;
  padding: 0 20px 0 7px;
  background: #f1f1f1;
`;

const StatusInfo = styled.div`
  display: flex;
  flex: 1;
  gap: 19px;
  padding-top: 2px;
`;

const ViewButton = styled.button`
  display: flex;
  align-items: center;
  justify-content: center;
  width: 38px;
  padding-bottom: 2px;
  background: ${({ $active }) => ($active ? "#cacaca" : "transparent")};
`;

const ZoomControl = styled.div`
  display: flex;
  align-items: center;
  gap: 4px;
  margin-left: 3px;

  output {
    width: 34px;
    padding-bottom: 3px;
    text-align: right;
  }
`;

const ZoomStep = styled.button`
  width: 8px;
  font-size: 16px;
  font-weight: 700;
  line-height: 16px;
`;

const ZoomSlider = styled.input`
  width: 102px;
  height: 12px;
  margin: 0;
  appearance: none;
  background: linear-gradient(#a5a5a5, #a5a5a5) center / 100% 1px no-repeat,
    linear-gradient(#a5a5a5, #a5a5a5) center / 1px 6px no-repeat;

  &::-webkit-slider-thumb {
    appearance: none;
    width: 4px;
    height: 11px;
    background: #666;
  }
`;

/* ---------- overlays ---------- */

const Watermark = styled.div`
  position: absolute;
  z-index: 3;
  right: 9px;
  bottom: 3px;
  display: flex;
  align-items: center;
  gap: 1px;
  opacity: 0.8;
  pointer-events: none;
`;

const WatermarkText = styled.div`
  display: flex;
  flex-direction: column;
  font-weight: 700;

  strong {
    font-size: 21px;
    line-height: 26px;
    color: #4285cc;
  }

  span {
    font-family: "Liberation Sans", sans-serif;
    font-size: 16px;
    line-height: 18px;
    color: #4fb56b;
  }
`;

const SwirlLogo = () => (
  <Icon w={44} h={40}>
    <defs>
      <linearGradient id="sky" x1="0" y1="1" x2="1" y2="0">
        <stop offset="0" stopColor="#2a63b5" />
        <stop offset="1" stopColor="#4db4e8" />
      </linearGradient>
      <linearGradient id="leaf" x1="0" y1="1" x2="1" y2="0">
        <stop offset="0" stopColor="#e8dc3c" />
        <stop offset="1" stopColor="#2da35c" />
      </linearGradient>
    </defs>
    <path
      d="M43 1C22 0 0 12 1 23c1 9 14 9 22 4 5-3 5-8 1-11 1 6-4 9-10 9-7 0-8-6-2-12C19 6 30 3 43 1z"
      fill="url(#sky)"
    />
    <path d="M20 14c5 0 9-2 11-6 10 3 13 12 7 20C32 36 18 41 3 38c12-1 22-6 26-12 3-5 0-11-9-12z" fill="url(#leaf)" />
  </Icon>
);

const Annotations = styled.svg`
  position: absolute;
  z-index: 4;
  top: 0;
  left: -1px;
  pointer-events: none;
  overflow: visible;
`;

const ARROWS = [
  { from: [310, 283], to: [151, 57] },
  { from: [769, 206], to: [933, 114] },
  { from: [766, 475], to: [964, 459] },
];

const Arrow = ({ from, to }) => {
  const dx = to[0] - from[0];
  const dy = to[1] - from[1];
  const len = Math.hypot(dx, dy);
  const angle = (Math.atan2(dy, dx) * 180) / Math.PI;
  return (
    <g transform={`translate(${from[0]} ${from[1]}) rotate(${angle})`}>
      <path d={`M0 0H${len - 20}`} stroke="#fe0000" strokeWidth="3" strokeLinecap="round" />
      <path d={`M${len} 0l-26 -7 4 7 -4 7z`} fill="#fe0000" />
    </g>
  );
};

const TABS = [
  "文件", "开始", "插入", "设计", "布局", "引用", "邮件", "审阅", "视图", "工具",
  "开发工具", "PDF工具集", "金山文档", "百度网盘",
];

function App() {
  return (
    <>
      <GlobalStyle />
      <Window>
        <TitleArea>
          <ArtLayer>
            <TitleArt />
          </ArtLayer>
          <TitleBar>
            <Title>我的大学规划.docx [兼容模式] - Word</Title>
            <WindowControls>
              <button aria-label="功能区显示选项"><RibbonToggleIcon /></button>
              <button aria-label="最小化"><MinimizeIcon /></button>
              <button aria-label="最大化"><MaximizeIcon /></button>
              <button aria-label="关闭"><ExitIcon /></button>
            </WindowControls>
          </TitleBar>
          <TabBar>
            {TABS.map((name) => (
              <Tab key={name} $active={name === "插入"}>{name}</Tab>
            ))}
            <TellMe>
              <BulbIcon />
              <input aria-label="告诉我您想要做什么" placeholder="告诉我您想要做什么..." />
            </TellMe>
            <WarningSlot><WarningIcon /></WarningSlot>
            <ShareButton><PersonIcon />共享</ShareButton>
          </TabBar>
        </TitleArea>

        <Ribbon>
          <Group $width={74}>
            <GroupBody $pad={7}>
              <SmallColumn $width={60}>
                <Small icon={<CoverIcon />} label="封面" caret />
                <Small icon={<BlankPageIcon />} label="空白页" />
                <Small icon={<PageBreakIcon />} label="分页" />
              </SmallColumn>
            </GroupBody>
            <GroupName>页面</GroupName>
          </Group>
          <Group $width={51}>
            <GroupBody $pad={4}>
              <Big icon={<TableIcon />} label="表格" caret />
            </GroupBody>
            <GroupName>表格</GroupName>
          </Group>
          <Group $width={297}>
            <GroupBody $pad={4}>
              <Big icon={<PictureIcon />} label="图片" />
              <Big $width={52} icon={<OnlinePictureIcon />} label="联机图片" />
              <Big icon={<ShapesIcon />} label="形状" caret />
              <Big $width={56} icon={<SmartArtIcon />} label="SmartArt" />
              <Big $width={44} icon={<ChartIcon />} label="图表" />
              <Big $width={48} icon={<ScreenshotIcon />} label="屏幕截图" caret />
            </GroupBody>
            <GroupName>插图</GroupName>
          </Group>
          <Group $width={174}>
            <GroupBody $pad={7}>
              <SmallColumn $width={99} $loose>
                <Small $tall icon={<StoreIcon />} label="应用商店" />
                <Small $tall $far icon={<AddinsIcon />} label="我的加载项" caret />
              </SmallColumn>
              <Big $width={62} icon={<WikiLetter>W</WikiLetter>} label="Wikipedia" />
            </GroupBody>
            <GroupName>加载项</GroupName>
          </Group>
          <Group $width={62}>
            <GroupBody>
              <Big $width={61} icon={<VideoIcon />} label="联机视频" disabled />
            </GroupBody>
            <GroupName>媒体</GroupName>
          </Group>
          <Group $width={86}>
            <GroupBody $pad={7}>
              <SmallColumn $width={76}>
                <Small icon={<LinkIcon />} label="超链接" />
                <Small icon={<FlagIcon />} label="书签" />
                <Small icon={<CrossRefIcon />} label="交叉引用" />
              </SmallColumn>
            </GroupBody>
            <GroupName>链接</GroupName>
          </Group>
          <Group $width={51}>
            <GroupBody $pad={4}>
              <Big icon={<CommentIcon />} label="批注" />
            </GroupBody>
            <GroupName>批注</GroupName>
          </Group>
          <Group $width={135}>
            <GroupBody $pad={4}>
              <Big icon={<HeaderIcon />} label="页眉" caret />
              <Big icon={<FooterIcon />} label="页脚" caret />
              <Big icon={<PageNumberIcon />} label="页码" caret />
            </GroupBody>
            <GroupName>页眉和页脚</GroupName>
          </Group>
          <Group $width={226}>
            <GroupBody $pad={4}>
              <Big $pressed icon={<TextBoxIcon />} label="文本框" caret />
              <GroupBody $pad={3}>
                <SmallColumn $width={86}>
                  <Small icon={<PartsIcon />} label="文档部件" caret />
                  <Small icon={<WordArtIcon />} label="艺术字" caret />
                  <Small icon={<DropCapIcon />} label="首字下沉" caret disabled />
                </SmallColumn>
                <SmallColumn>
                  <Small $far icon={<SignatureIcon />} label="签名行" caret />
                  <Small icon={<DateIcon />} label="日期和时间" />
                  <Small $far icon={<ObjectIcon />} label="对象" caret />
                </SmallColumn>
              </GroupBody>
            </GroupBody>
            <Gallery>
              <GalleryHeading>内置</GalleryHeading>
              <GalleryGrid>
                {GALLERY.map(({ name, hot, art }) => (
                  <GalleryItem key={name} $hot={hot}>
                    <Preview>
                      <Icon w={94} h={151}>{art}</Icon>
                    </Preview>
                    {name}
                  </GalleryItem>
                ))}
              </GalleryGrid>
              <Menu>
                <MenuItem><OfficeMoreIcon /><span>Office.com 中的其他文本框(<u>M</u>)</span></MenuItem>
                <MenuItem><DrawBoxIcon /><span>绘制文本框(<u>D</u>)</span></MenuItem>
                <MenuItem><DrawVerticalIcon /><span>绘制竖排文本框(<u>V</u>)</span></MenuItem>
                <MenuItem disabled><SaveBoxIcon /><span>将所选内容保存到文本框库(<u>S</u>)</span></MenuItem>
              </Menu>
            </Gallery>
          </Group>
          <Group $width={75}>
            <GroupBody $pad={7}>
              <SmallColumn $width={66}>
                <Small $far icon={<PiIcon />} label="公式" caret />
                <Small icon={<OmegaIcon />} label="符号" caret />
                <Small icon={<NumberIcon />} label="编号" />
              </SmallColumn>
            </GroupBody>
          </Group>
        </Ribbon>

        <QuickBar>
          <QuickSlot><button aria-label="保存"><SaveIcon /></button></QuickSlot>
          <QuickSlot>
            <button aria-label="撤消"><UndoIcon /></button>
            <Caret />
          </QuickSlot>
          <QuickSlot><button aria-label="恢复"><RedoIcon /></button></QuickSlot>
          <QuickSlot><button aria-label="并排查看"><ColumnsIcon /></button></QuickSlot>
          <QuickSlot><button aria-label="超链接"><LinkIcon /></button></QuickSlot>
          <QuickSlot><button aria-label="打印预览"><PreviewIcon /></button></QuickSlot>
          <QuickSlot><button aria-label="附件"><AttachIcon /></button></QuickSlot>
          <QuickSlot><button aria-label="插入域"><FieldIcon /></button></QuickSlot>
          <QuickMore aria-label="自定义快速访问工具栏"><Caret /></QuickMore>
        </QuickBar>

        <Workspace>
          <NavPane>
            <NavHeader>
              <h2>导航</h2>
              <button aria-label="窗格选项"><WideCaret /></button>
              <button aria-label="关闭窗格"><CloseIcon /></button>
            </NavHeader>
            <SearchBox>
              <input aria-label="搜索文档" placeholder="搜索文档" />
              <SearchIcon />
              <Caret />
            </SearchBox>
            <NavTabs>
              <NavTab>标题</NavTab>
              <NavTab $active>页面</NavTab>
              <NavTab>结果</NavTab>
            </NavTabs>
            <PageList>
              <PageThumb aria-label="第 1 页" />
              <PageLabel>1</PageLabel>
              <PageThumb $active aria-label="第 2 页"><MiniPage /></PageThumb>
              <PageLabel $active>2</PageLabel>
            </PageList>
          </NavPane>

          <RulerColumn>
            <TabStop aria-label="制表符"><span><i /></span></TabStop>
            <VerticalRuler />
          </RulerColumn>

          <DocColumn>
            <HorizontalRuler />
            <Sheet>
              <ScoreTable>
                <thead>
                  <tr><th>序号</th><th>姓名</th><th>总成绩</th></tr>
                </thead>
                <tbody>
                  {ROWS.map(([no, name], i) => (
                    <tr key={i}><td>{no}</td><td>{name}</td><td /></tr>
                  ))}
                </tbody>
              </ScoreTable>
              <Article>
                {PARAGRAPHS.map((lines) => (
                  <Paragraph key={lines[0]}>
                    {lines.map((line) => <Line key={line}>{line}</Line>)}
                  </Paragraph>
                ))}
                <CheckLine>✓☑</CheckLine>
                <TextCaret />
              </Article>
            </Sheet>
          </DocColumn>
        </Workspace>

        <StatusBar>
          <StatusInfo>
            <span>{`第 2 页${C}共 2 页`}</span>
            <span>418 个字</span>
            <span>中文(中国)</span>
            <span>修订: 关闭</span>
            <span>插入</span>
            <MacroIcon />
          </StatusInfo>
          <ViewButton aria-label="阅读视图"><ReadModeIcon /></ViewButton>
          <ViewButton $active aria-label="页面视图"><PrintLayoutIcon /></ViewButton>
          <ViewButton aria-label="Web 版式视图"><WebLayoutIcon /></ViewButton>
          <ZoomControl>
            <ZoomStep aria-label="缩小">−</ZoomStep>
            <ZoomSlider type="range" aria-label="显示比例" min="0" max="100" defaultValue="44" />
            <ZoomStep aria-label="放大">+</ZoomStep>
            <output>90%</output>
          </ZoomControl>
        </StatusBar>

        <Watermark>
          <SwirlLogo />
          <WatermarkText>
            <strong>极光下载站</strong>
            <span>www.xz7.com</span>
          </WatermarkText>
        </Watermark>

        <Annotations width="1" height="1" fill="none" aria-hidden="true">
          <defs>
            <filter id="drop" x="-20%" y="-60%" width="140%" height="220%">
              <feDropShadow dx="3" dy="3" stdDeviation="2" floodOpacity="0.6" />
            </filter>
          </defs>
          {ARROWS.map((arrow) => (
            <g key={arrow.to.join()} filter="url(#drop)">
              <Arrow {...arrow} />
            </g>
          ))}
          <path
            d="M1003.500 455.500v16l4-4 3 7 2-1-3-6h5z"
            fill="#fff"
            stroke="#222"
          />
        </Annotations>
      </Window>
    </>
  );
}

export default App;
